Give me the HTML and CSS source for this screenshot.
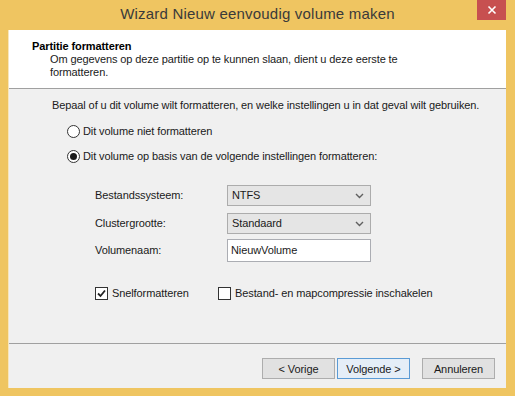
FILE: index.html
```html
<!DOCTYPE html>
<html lang="nl">
<head>
<meta charset="utf-8">
<title>Wizard Nieuw eenvoudig volume maken</title>
<link rel="stylesheet" href="styles.css">
</head>
<body>
<div class="window">
  <div class="titlebar">
    <span></span>
    <div class="title">Wizard Nieuw eenvoudig volume maken</div>
    <div class="close-wrap">
      <div class="close">
        <svg width="10" height="10" viewBox="0 0 10 10"><path d="M1.5 1.5 L8.5 8.5 M8.5 1.5 L1.5 8.5" stroke="#fff" stroke-width="1.6" fill="none"/></svg>
      </div>
    </div>
  </div>
  <div class="client">
    <div class="header">
      <div class="h-title">Partitie formatteren</div>
      <div class="h-desc">Om gegevens op deze partitie op te kunnen slaan, dient u deze eerste te<br>formatteren.</div>
    </div>
    <div class="content">
      <p class="intro">Bepaal of u dit volume wilt formatteren, en welke instellingen u in dat geval wilt gebruiken.</p>
      <div class="options">
        <div class="radio-row"><span class="radio"></span><span>Dit volume niet formatteren</span></div>
        <div class="radio-row"><span class="radio checked"></span><span>Dit volume op basis van de volgende instellingen formatteren:</span></div>
      </div>
      <div class="form">
        <div class="field f1">
          <span class="flabel">Bestandssysteem:</span>
          <div class="select"><span>NTFS</span><svg width="9" height="6" viewBox="0 0 9 6"><path d="M1 1 L4.5 4.5 L8 1" stroke="#606060" stroke-width="1.4" fill="none"/></svg></div>
        </div>
        <div class="field f2">
          <span class="flabel">Clustergrootte:</span>
          <div class="select"><span>Standaard</span><svg width="9" height="6" viewBox="0 0 9 6"><path d="M1 1 L4.5 4.5 L8 1" stroke="#606060" stroke-width="1.4" fill="none"/></svg></div>
        </div>
        <div class="field f3">
          <span class="flabel">Volumenaam:</span>
          <div class="input">NieuwVolume</div>
        </div>
      </div>
      <div class="checks">
        <div class="check-row c1"><span class="checkbox"><svg width="11" height="11" viewBox="0 0 11 11"><path d="M2 5.5 L4.5 8 L9 2.5" stroke="#222" stroke-width="1.8" fill="none"/></svg></span><span>Snelformatteren</span></div>
        <div class="check-row"><span class="checkbox"></span><span>Bestand- en mapcompressie inschakelen</span></div>
      </div>
    </div>
    <div class="footer">
      <div class="btn">&lt; Vorige</div>
      <div class="btn default">Volgende &gt;</div>
      <div class="btn cancel">Annuleren</div>
    </div>
  </div>
</div>
</body>
</html>
```
FILE: styles.css
```css
* { box-sizing: border-box; }
html, body { margin: 0; padding: 0; }
body {
  width: 515px;
  height: 396px;
  overflow: hidden;
  background: #efc561;
  font-family: "Liberation Sans", Arial, sans-serif;
  font-size: 11px;
  letter-spacing: -0.1px;
  color: #1a1a1a;
}
.window {
  width: 515px;
  height: 396px;
  display: flex;
  flex-direction: column;
}
.titlebar {
  height: 30px;
  display: grid;
  grid-template-columns: 1fr auto 1fr;
  align-items: start;
}
.title {
  font-family: "Liberation Sans", Arial, sans-serif;
  font-size: 15px;
  letter-spacing: 0.2px;
  color: #3a3a3a;
  line-height: 28px;
}
.close-wrap {
  display: flex;
  justify-content: flex-end;
  padding-right: 9px;
}
.close {
  width: 29px;
  height: 20px;
  background: #c75050;
  display: flex;
  align-items: center;
  justify-content: center;
}
.client {
  margin: 0 9px 0 8px;
  height: 358px;
  background: #f0f0f0;
  display: flex;
  flex-direction: column;
  border-left: 1px solid #f7e6bd;
}
.header {
  height: 59px;
  background: #fff;
  border-bottom: 1px solid #a0a0a0;
  padding: 10px 0 0 23px;
  line-height: 13px;
}
.h-title { font-weight: bold; color: #000; }
.h-desc { padding-left: 18px; }
.content {
  height: 255px;
  border-bottom: 1px solid #a0a0a0;
  padding: 10px 0 0 43px;
  line-height: 13px;
}
.intro { margin: 0; }
.options {
  margin: 11px 0 0 15px;
  display: flex;
  flex-direction: column;
  gap: 9px;
}
.radio-row {
  height: 16px;
  display: flex;
  align-items: center;
  gap: 3px;
}
.radio {
  width: 13px;
  height: 13px;
  border-radius: 50%;
  border: 1px solid #333;
  background: #fff;
  display: flex;
  align-items: center;
  justify-content: center;
}
.radio.checked::after {
  content: "";
  width: 7px;
  height: 7px;
  border-radius: 50%;
  background: #1b1b1b;
}
.form {
  margin: 21px 0 0 43px;
  display: flex;
  flex-direction: column;
}
.field {
  display: grid;
  grid-template-columns: 132px 144px;
  align-items: center;
}
.f2 { margin-top: 7px; }
.f3 { margin-top: 5px; }
.select {
  height: 21px;
  border: 1px solid #acacac;
  background: #e5e5e5;
  display: flex;
  align-items: center;
  justify-content: space-between;
  padding: 0 6px 0 4px;
}
.input {
  height: 23px;
  border: 1px solid #abadb3;
  background: #fff;
  display: flex;
  align-items: center;
  padding-left: 3px;
}
.checks {
  margin: 25px 0 0 43px;
  display: flex;
}
.check-row {
  display: flex;
  align-items: center;
  gap: 4px;
  height: 13px;
}
.c1 { width: 123px; }
.checkbox {
  width: 13px;
  height: 13px;
  border: 1px solid #333;
  background: #fff;
  display: flex;
  align-items: center;
  justify-content: center;
}
.footer {
  flex: 1;
  display: flex;
  justify-content: flex-end;
  align-items: flex-start;
  padding: 14px 11px 0 0;
}
.btn {
  width: 73px;
  height: 21px;
  border: 1px solid #adadad;
  background: #e1e1e1;
  display: flex;
  align-items: center;
  justify-content: center;
}
.btn.default {
  margin-left: 2px;
  border-color: #5b9bd5;
  background: #e5eef7;
}
.btn.cancel { margin-left: 12px; }
```
